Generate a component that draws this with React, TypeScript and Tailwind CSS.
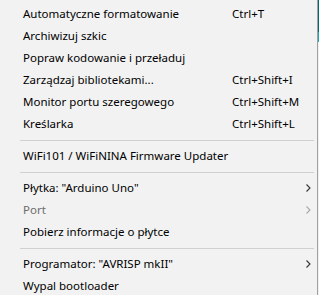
import React from "react";

type Item =
  | { type: "item"; label: string; shortcut?: string; sub?: boolean; disabled?: boolean }
  | { type: "sep" };

const items: Item[] = [
  { type: "item", label: "Automatyczne formatowanie", shortcut: "Ctrl+T" },
  { type: "item", label: "Archiwizuj szkic" },
  { type: "item", label: "Popraw kodowanie i przeładuj" },
  { type: "item", label: "Zarządzaj bibliotekami...", shortcut: "Ctrl+Shift+I" },
  { type: "item", label: "Monitor portu szeregowego", shortcut: "Ctrl+Shift+M" },
  { type: "item", label: "Kreślarka", shortcut: "Ctrl+Shift+L" },
  { type: "sep" },
  { type: "item", label: "WiFi101 / WiFiNINA Firmware Updater" },
  { type: "sep" },
  { type: "item", label: "Płytka: \"Arduino Uno\"", sub: true },
  { type: "item", label: "Port", sub: true, disabled: true },
  { type: "item", label: "Pobierz informacje o płytce" },
  { type: "sep" },
  { type: "item", label: "Programator: \"AVRISP mkII\"", sub: true },
  { type: "item", label: "Wypal bootloader" },
];

function Chevron({ color }: { color: string }) {
  return (
    <svg width="5" height="8" viewBox="0 0 5 8" className="block">
      <polyline points="0.5,0.5 4,4 0.5,7.5" fill="none" stroke={color} strokeWidth="1.1" />
    </svg>
  );
}

export default function App() {
  return (
    <div
      className="flex w-[319px] h-[295px] overflow-hidden"
      style={{ fontFamily: '"Noto Sans", "Open Sans", sans-serif' }}
    >
      <div className="w-[318px] h-full bg-[#f2f2f2] border-r border-[#a0a0a0] pt-[3px] text-[11.5px] text-black">
        {items.map((it, i) =>
          it.type === "sep" ? (
            <div key={i} className="h-[10px] flex items-center pl-[20px] pr-[3px]">
              <div className="h-px w-full bg-[#d0d0d0]" />
            </div>
          ) : (
            <div key={i} className="h-[22px] flex items-center pl-[23px] pr-[6px]">
              <span className={`w-[209px] whitespace-nowrap ${it.disabled ? "text-[#6d6d6d]" : ""}`}>
                {it.label}
              </span>
              <span className="flex-1 whitespace-nowrap">{it.shortcut ?? ""}</span>
              {it.sub && <Chevron color={it.disabled ? "#a8a8a8" : "#333333"} />}
            </div>
          )
        )}
      </div>
      <div className="w-px h-full flex flex-col">
        <div className="h-[32px] bg-[#00696d]" />
        <div className="h-[10px] bg-[#1aa6aa]" />
        <div className="flex-1 bg-[#f0f0f0]" />
      </div>
    </div>
  );
}
